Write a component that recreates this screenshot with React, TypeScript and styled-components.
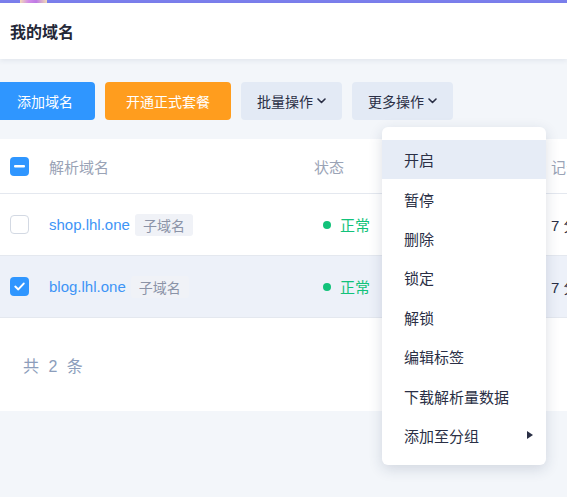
import React from "react";
import styled, { createGlobalStyle } from "styled-components";

const GlobalStyle = createGlobalStyle`
  body {
    margin: 0;
    background: #f3f6fa;
    font-family: "Liberation Sans", "Noto Sans CJK SC", sans-serif;
    overflow: hidden;
  }
`;

const Page = styled.div`
  width: 567px;
  min-height: 497px;
  background: #f3f6fa;
  overflow: hidden;
`;

const TopStrip = styled.div`
  height: 3px;
  background: #7b7fec;
  display: flex;
  padding-left: 20px;
`;

const Avatar = styled.div`
  width: 27px;
  height: 3px;
  background: linear-gradient(90deg, #f3dcb6 0%, #d48fe8 30%, #c07ae6 60%, #f3dcb6 100%);
`;

const Header = styled.header`
  height: 56px;
  background: #fff;
  display: flex;
  align-items: center;
  padding-left: 10px;
  box-shadow: 0 2px 5px rgba(40, 60, 100, 0.08);
  position: relative;
`;

const Title = styled.h1`
  margin: 0;
  font-size: 16px;
  font-weight: 700;
  color: #242838;
`;

const Toolbar = styled.div`
  display: flex;
  gap: 10px;
  margin: 23px 0 0 -5px;
  height: 38px;
`;

const Button = styled.button<{ $variant: "primary" | "warn" | "plain" }>`
  height: 38px;
  border: none;
  border-radius: 4px;
  font-family: inherit;
  font-size: 14px;
  display: flex;
  align-items: center;
  gap: 4px;
  cursor: pointer;
  background: ${(p) =>
    p.$variant === "primary" ? "#2f96ff" : p.$variant === "warn" ? "#ff9d1e" : "#e3eaf5"};
  color: ${(p) => (p.$variant === "plain" ? "#2a2f45" : "#fff")};
  padding: 0 ${(p) => (p.$variant === "plain" ? "16px" : p.$variant === "primary" ? "22px" : "21px")};
`;

const MenuAnchor = styled.div`
  position: relative;
`;

const Dropdown = styled.ul`
  position: absolute;
  left: 30px;
  top: 45px;
  width: 164px;
  margin: 0;
  padding: 13px 0 10px;
  list-style: none;
  background: #fff;
  border-radius: 6px;
  box-shadow: 0 4px 14px rgba(30, 50, 90, 0.16);
  z-index: 10;
`;

const MenuItem = styled.li<{ $active?: boolean }>`
  height: 39.4px;
  display: flex;
  align-items: center;
  justify-content: space-between;
  padding: 0 13px 0 22px;
  font-size: 15px;
  color: #2a2f45;
  background: ${(p) => (p.$active ? "#e6ecf6" : "transparent")};
`;

const Caret = styled.span`
  width: 0;
  height: 0;
  border-top: 4px solid transparent;
  border-bottom: 4px solid transparent;
  border-left: 6px solid #2a2f45;
`;

const Card = styled.section`
  margin-top: 19px;
  background: #fff;
  width: 620px;
`;

const Row = styled.div<{ $head?: boolean; $selected?: boolean }>`
  display: grid;
  grid-template-columns: 49px 265px 237px 1fr;
  align-items: center;
  height: ${(p) => (p.$head ? "54px" : "61px")};
  border-bottom: 1px solid #e4e8ef;
  background: ${(p) => (p.$selected ? "#edf1f9" : "#fff")};
  font-size: 15px;
  color: ${(p) => (p.$head ? "#9aa3b6" : "#2a2f45")};
  & > :first-child {
    padding-left: 10px;
  }
`;

const Box = styled.span<{ $on?: boolean }>`
  width: 19px;
  height: 19px;
  box-sizing: border-box;
  border-radius: 4px;
  display: flex;
  align-items: center;
  justify-content: center;
  background: ${(p) => (p.$on ? "#2f96ff" : "#fff")};
  border: ${(p) => (p.$on ? "none" : "1px solid #d3d9e3")};
`;

const NameCell = styled.div`
  display: flex;
  align-items: center;
  gap: 5px;
`;

const Domain = styled.span`
  color: #3d94f6;
`;

const Tag = styled.span`
  height: 22px;
  padding: 0 8px;
  border-radius: 3px;
  background: #f0f2f7;
  color: #8b93a7;
  font-size: 14px;
  display: flex;
  align-items: center;
`;

const Status = styled.div`
  display: flex;
  align-items: center;
  gap: 9px;
  padding-left: 9px;
  color: #12c27a;
`;

const Dot = styled.span`
  width: 8px;
  height: 8px;
  border-radius: 50%;
  background: #12c27a;
`;

const Footer = styled.div`
  height: 93px;
  display: flex;
  align-items: center;
  padding-left: 23px;
  font-size: 16px;
  letter-spacing: 2.5px;
  color: #8c9dbb;
`;

const Chevron = () => (
  <svg width="9" height="6" viewBox="0 0 9 6" fill="none">
    <path d="M1 1l3.5 3.5L8 1" stroke="#2a2f45" strokeWidth="1.6" strokeLinecap="round" strokeLinejoin="round" />
  </svg>
);

const Dash = () => (
  <svg width="11" height="3" viewBox="0 0 11 3">
    <rect width="11" height="2.4" rx="1" fill="#fff" />
  </svg>
);

const Check = () => (
  <svg width="11" height="9" viewBox="0 0 11 9" fill="none">
    <path d="M1.3 4.6l3 2.8L9.7 1.6" stroke="#fff" strokeWidth="2" strokeLinecap="round" strokeLinejoin="round" />
  </svg>
);

const menu = ["开启", "暂停", "删除", "锁定", "解锁", "编辑标签", "下载解析量数据", "添加至分组"];

const rows = [
  { name: "shop.lhl.one", selected: false },
  { name: "blog.lhl.one", selected: true },
];

export default function App() {
  return (
    <Page>
      <GlobalStyle />
      <TopStrip>
        <Avatar />
      </TopStrip>
      <Header>
        <Title>我的域名</Title>
      </Header>
      <Toolbar>
        <Button $variant="primary">添加域名</Button>
        <Button $variant="warn">开通正式套餐</Button>
        <Button $variant="plain">
          批量操作 <Chevron />
        </Button>
        <MenuAnchor>
          <Button $variant="plain">
            更多操作 <Chevron />
          </Button>
          <Dropdown>
            {menu.map((m, i) => (
              <MenuItem key={m} $active={i === 0}>
                {m}
                {i === menu.length - 1 && <Caret />}
              </MenuItem>
            ))}
          </Dropdown>
        </MenuAnchor>
      </Toolbar>
      <Card>
        <Row $head>
          <div>
            <Box $on>
              <Dash />
            </Box>
          </div>
          <div>解析域名</div>
          <div>状态</div>
          <div>记录数</div>
        </Row>
        {rows.map((r) => (
          <Row key={r.name} $selected={r.selected}>
            <div>
              <Box $on={r.selected}>{r.selected && <Check />}</Box>
            </div>
            <NameCell>
              <Domain>{r.name}</Domain>
              <Tag>子域名</Tag>
            </NameCell>
            <Status>
              <Dot />
              正常
            </Status>
            <div>7 分钟</div>
          </Row>
        ))}
        <Footer>共 2 条</Footer>
      </Card>
    </Page>
  );
}
